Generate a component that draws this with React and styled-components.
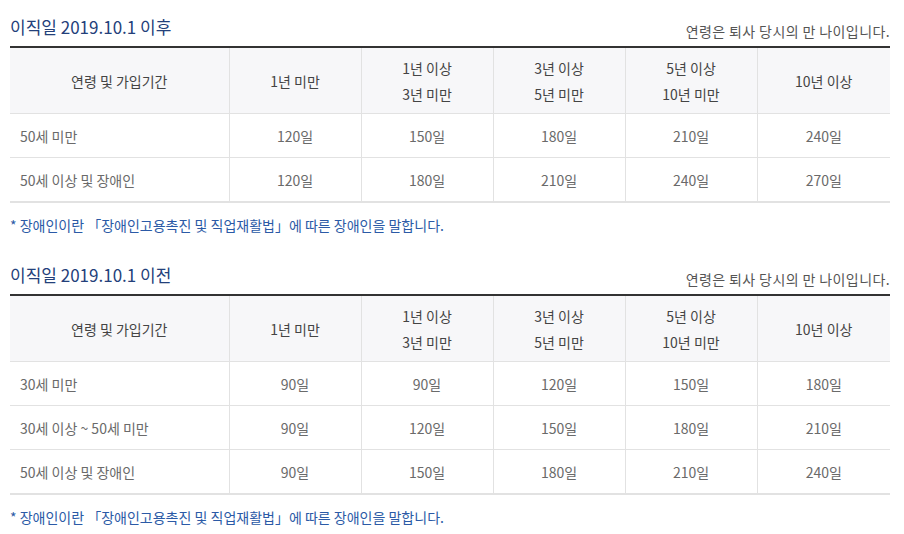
import React from "react";
import styled, { createGlobalStyle } from "styled-components";

const GlobalStyle = createGlobalStyle`
  body {
    margin: 0;
    background: #fff;
    font-family: "Noto Sans CJK KR", "Noto Sans", sans-serif;
  }
`;

const Page = styled.div`
  width: 880px;
  padding: 13px 10px 0;
`;

const Section = styled.section`
  margin-bottom: 25px;
`;

const TitleBar = styled.div`
  display: flex;
  justify-content: space-between;
  align-items: flex-end;
  height: 33px;
`;

const Title = styled.h3`
  margin: 0 0 9px;
  font-size: 17px;
  font-weight: 400;
  color: #23407a;
  line-height: 20px;
`;

const Note = styled.span`
  margin: 0 0 6px;
  font-size: 14px;
  letter-spacing: 0.4px;
  color: #555;
  line-height: 18px;
`;

const Table = styled.table`
  width: 100%;
  border-collapse: collapse;
  table-layout: fixed;
  border-top: 2px solid #333;
  border-bottom: 2px solid #e2e2e2;
  font-size: 14px;
`;

const Th = styled.th`
  height: 63px;
  background: #f7f7f9;
  color: #444;
  font-weight: 400;
  line-height: 26px;
  border-left: 1px solid #e2e2e2;
  border-bottom: 1px solid #e2e2e2;
  &:first-child {
    border-left: none;
  }
`;

const Td = styled.td`
  height: 43px;
  padding: 0 10px;
  color: #6a6a6a;
  text-align: ${(p) => (p.$left ? "left" : "center")};
  border-left: 1px solid #e2e2e2;
  border-bottom: 1px solid #e2e2e2;
  &:first-child {
    border-left: none;
  }
`;

const Foot = styled.p`
  margin: 11px 0 0;
  font-size: 14px;
  line-height: 22px;
  color: #2b5aa6;
`;

const heads = [
  ["연령 및 가입기간"],
  ["1년 미만"],
  ["1년 이상", "3년 미만"],
  ["3년 이상", "5년 미만"],
  ["5년 이상", "10년 미만"],
  ["10년 이상"],
];

const sections = [
  {
    title: "이직일 2019.10.1 이후",
    rows: [
      ["50세 미만", 120, 150, 180, 210, 240],
      ["50세 이상 및 장애인", 120, 180, 210, 240, 270],
    ],
  },
  {
    title: "이직일 2019.10.1 이전",
    rows: [
      ["30세 미만", 90, 90, 120, 150, 180],
      ["30세 이상 ~ 50세 미만", 90, 120, 150, 180, 210],
      ["50세 이상 및 장애인", 90, 150, 180, 210, 240],
    ],
  },
];

const widths = [219, 132, 132, 132, 132, 133];

export default function App() {
  return (
    <Page>
      <GlobalStyle />
      {sections.map((s) => (
        <Section key={s.title}>
          <TitleBar>
            <Title>{s.title}</Title>
            <Note>연령은 퇴사 당시의 만 나이입니다.</Note>
          </TitleBar>
          <Table>
            <colgroup>
              {widths.map((w, i) => (
                <col key={i} style={{ width: w }} />
              ))}
            </colgroup>
            <thead>
              <tr>
                {heads.map((h, i) => (
                  <Th key={i}>
                    {h.map((line, j) => (
                      <div key={j}>{line}</div>
                    ))}
                  </Th>
                ))}
              </tr>
            </thead>
            <tbody>
              {s.rows.map((r) => (
                <tr key={r[0]}>
                  <Td $left>{r[0]}</Td>
                  {r.slice(1).map((d, i) => (
                    <Td key={i}>{d}일</Td>
                  ))}
                </tr>
              ))}
            </tbody>
          </Table>
          <Foot>* 장애인이란 「장애인고용촉진 및 직업재활법」에 따른 장애인을 말합니다.</Foot>
        </Section>
      ))}
    </Page>
  );
}
